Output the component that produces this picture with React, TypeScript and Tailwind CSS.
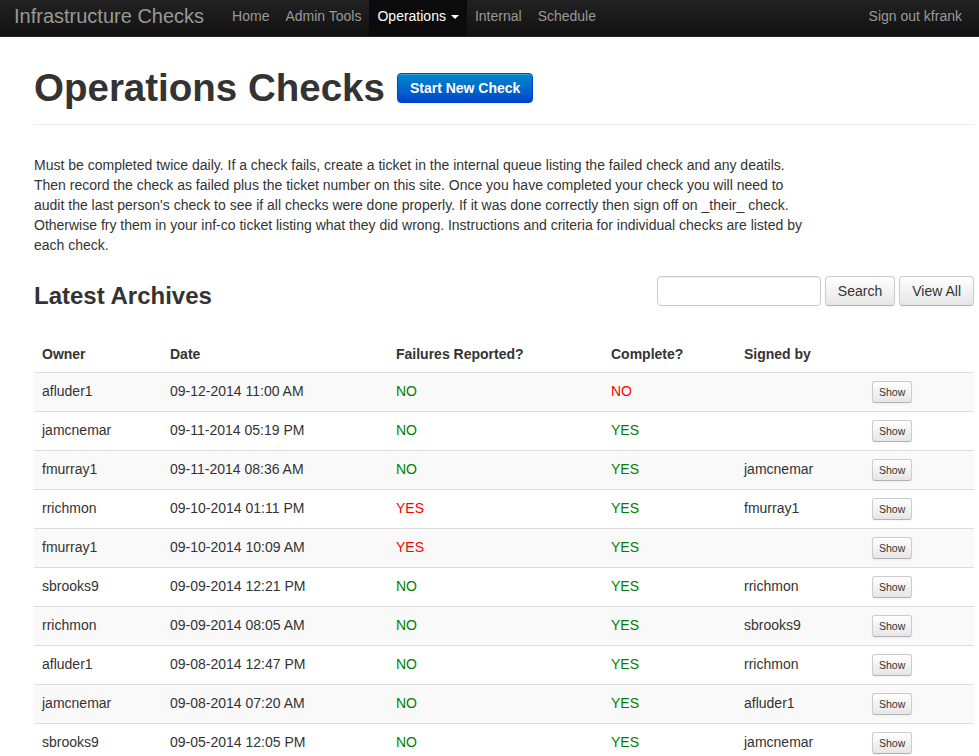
const rows = [
  { owner: "afluder1", date: "09-12-2014 11:00 AM", fail: "NO", done: "NO", signed: "" },
  { owner: "jamcnemar", date: "09-11-2014 05:19 PM", fail: "NO", done: "YES", signed: "" },
  { owner: "fmurray1", date: "09-11-2014 08:36 AM", fail: "NO", done: "YES", signed: "jamcnemar" },
  { owner: "rrichmon", date: "09-10-2014 01:11 PM", fail: "YES", done: "YES", signed: "fmurray1" },
  { owner: "fmurray1", date: "09-10-2014 10:09 AM", fail: "YES", done: "YES", signed: "" },
  { owner: "sbrooks9", date: "09-09-2014 12:21 PM", fail: "NO", done: "YES", signed: "rrichmon" },
  { owner: "rrichmon", date: "09-09-2014 08:05 AM", fail: "NO", done: "YES", signed: "sbrooks9" },
  { owner: "afluder1", date: "09-08-2014 12:47 PM", fail: "NO", done: "YES", signed: "rrichmon" },
  { owner: "jamcnemar", date: "09-08-2014 07:20 AM", fail: "NO", done: "YES", signed: "afluder1" },
  { owner: "sbrooks9", date: "09-05-2014 12:05 PM", fail: "NO", done: "YES", signed: "jamcnemar" },
]

// failures: YES is bad, complete: NO is bad
const failColor = (v: string) => (v === "YES" ? "text-[#ff0000]" : "text-[#008000]")
const doneColor = (v: string) => (v === "NO" ? "text-[#ff0000]" : "text-[#008000]")

const navLinks = ["Home", "Admin Tools", "Operations", "Internal", "Schedule"]

const App = () => {
  return (
    <div className="min-h-screen bg-white text-[14px] leading-[20px] text-[#333] font-['Liberation_Sans',Arial,sans-serif]">
      {/* Top navbar */}
      <div className="flex h-[37px] items-stretch justify-between bg-gradient-to-b from-[#222] to-[#111] border-b border-[#252525]">
        <div className="flex items-stretch">
          <a className="ml-[14px] mr-[20px] pt-[6px] text-[20px] leading-[20px] text-[#999]">
            Infrastructure Checks
          </a>
          {navLinks.map((l) =>
            l === "Operations" ? (
              <a key={l} className="flex items-start gap-[4px] bg-[#0b0b0b] px-[8px] pt-[6px] text-white">
                {l}
                <span className="mt-[9px] ml-[1px] h-0 w-0 border-x-[4px] border-t-[4px] border-x-transparent border-t-white" />
              </a>
            ) : (
              <a key={l} className="px-[8px] pt-[6px] text-[#999]">
                {l}
              </a>
            )
          )}
        </div>
        <a className="mr-[9px] px-[8px] pt-[6px] text-[#999]">Sign out kfrank</a>
      </div>

      <div className="ml-[34px] w-[940px] pt-[31px]">
        {/* Page header */}
        <div className="flex items-center gap-[12px] border-b border-[#eee] pb-[16px]">
          <h1 className="text-[38.5px] font-bold leading-[40px]">Operations Checks</h1>
          <button className="h-[30px] rounded-[4px] border border-[#0044cc] bg-gradient-to-b from-[#0088cc] to-[#0044cc] px-[12px] font-bold text-white shadow-[inset_0_1px_0_rgba(255,255,255,0.2),0_1px_2px_rgba(0,0,0,0.05)]">
            Start New Check
          </button>
        </div>

        <p className="mt-[30px] w-[780px]">
          Must be completed twice daily. If a check fails, create a ticket in the internal queue listing the failed check and any deatils. Then record the check as failed plus the ticket number on this site. Once you have completed your check you will need to audit the last person's check to see if all checks were done properly. If it was done correctly then sign off on _their_ check. Otherwise fry them in your inf-co ticket listing what they did wrong. Instructions and criteria for individual checks are listed by each check.
        </p>

        {/* Archives header with search */}
        <div className="mt-[21px] flex items-start justify-between">
          <h2 className="text-[24px] font-bold leading-[40px]">Latest Archives</h2>
          <div className="flex items-center gap-[4px]">
            <input className="h-[30px] w-[164px] rounded-[4px] border border-[#ccc] px-[6px] shadow-[inset_0_1px_1px_rgba(0,0,0,0.075)] outline-none" />
            <button className="h-[30px] rounded-[4px] border border-[#ccc] border-b-[#b3b3b3] bg-gradient-to-b from-white to-[#e6e6e6] px-[12px] text-[#333] shadow-[0_1px_2px_rgba(0,0,0,0.05)]">
              Search
            </button>
            <button className="h-[30px] rounded-[4px] border border-[#ccc] border-b-[#b3b3b3] bg-gradient-to-b from-white to-[#e6e6e6] px-[12px] text-[#333] shadow-[0_1px_2px_rgba(0,0,0,0.05)]">
              View All
            </button>
          </div>
        </div>

        {/* Archive table */}
        <table className="mt-[20px] w-[940px] table-fixed border-collapse">
          <colgroup>
            <col className="w-[128px]" />
            <col className="w-[226px]" />
            <col className="w-[215px]" />
            <col className="w-[133px]" />
            <col className="w-[128px]" />
            <col className="w-[110px]" />
          </colgroup>
          <thead>
            <tr>
              <th className="p-[8px] text-left font-bold">Owner</th>
              <th className="p-[8px] text-left font-bold">Date</th>
              <th className="p-[8px] text-left font-bold">Failures Reported?</th>
              <th className="p-[8px] text-left font-bold">Complete?</th>
              <th className="p-[8px] text-left font-bold">Signed by</th>
              <th className="p-[8px]"></th>
            </tr>
          </thead>
          <tbody>
            {rows.map((r, i) => (
              <tr key={i} className={i % 2 === 0 ? "bg-[#f9f9f9]" : "bg-white"}>
                <td className="border-t border-[#ddd] p-[8px] align-top">{r.owner}</td>
                <td className="border-t border-[#ddd] p-[8px] align-top">{r.date}</td>
                <td className={"border-t border-[#ddd] p-[8px] align-top " + failColor(r.fail)}>{r.fail}</td>
                <td className={"border-t border-[#ddd] p-[8px] align-top " + doneColor(r.done)}>{r.done}</td>
                <td className="border-t border-[#ddd] p-[8px] align-top">{r.signed}</td>
                <td className="border-t border-[#ddd] p-[8px] align-top">
                  <button className="h-[22px] rounded-[3px] border border-[#ccc] border-b-[#b3b3b3] bg-gradient-to-b from-white to-[#e6e6e6] px-[6px] text-[10.5px] leading-[20px] text-[#333] shadow-[0_1px_2px_rgba(0,0,0,0.05)]">
                    Show
                  </button>
                </td>
              </tr>
            ))}
          </tbody>
        </table>
      </div>
    </div>
  )
}

export default App
